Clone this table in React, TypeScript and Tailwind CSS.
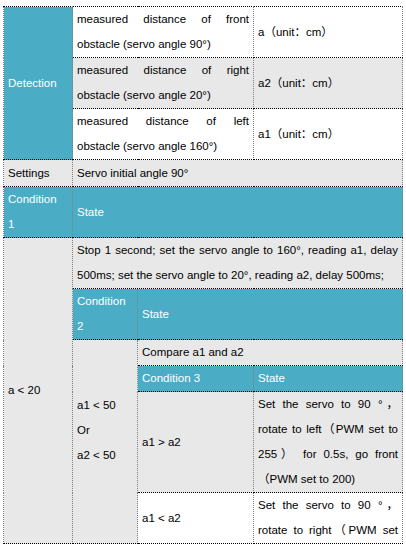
const teal = "bg-[#4bacc6] text-white"
const gray = "bg-[#e8e8e8]"

function J({ first, rest }: { first: string[]; rest?: string }) {
  return (
    <>
      {first.map((l, i) => (
        <div key={i} className="text-justify [text-align-last:justify]">
          {l}
        </div>
      ))}
      {rest && <div>{rest}</div>}
    </>
  )
}

const cell = "border border-dotted border-x-[#7f7f7f] border-y-black px-[4px] py-0 align-middle"

export default function App() {
  return (
    <div className="pl-[3px] pt-[6px] bg-white min-h-[545px]">
      <table
        className="table-fixed border-collapse w-[399px] text-[11.5px] leading-[25px] text-black"
        style={{ fontFamily: '"Liberation Sans", "Noto Sans CJK SC", sans-serif' }}
      >
        <colgroup>
          <col className="w-[69px]" />
          <col className="w-[65px]" />
          <col className="w-[116px]" />
          <col className="w-[149px]" />
        </colgroup>
        <tbody>
          {/* Detection */}
          <tr>
            <td rowSpan={3} className={`${cell} ${teal} border-t-solid`}>
              Detection
            </td>
            <td colSpan={2} className={`${cell} h-[50px] border-t-solid border-b-solid`}>
              <J first={["measured distance of front"]} rest="obstacle (servo angle 90°)" />
            </td>
            <td className={`${cell} border-t-solid border-b-solid`}>a（unit：cm）</td>
          </tr>
          <tr className={gray}>
            <td colSpan={2} className={`${cell} h-[50px]`}>
              <J first={["measured distance of right"]} rest="obstacle (servo angle 20°)" />
            </td>
            <td className={cell}>a2（unit：cm）</td>
          </tr>
          <tr>
            <td colSpan={2} className={`${cell} h-[50px]`}>
              <J first={["measured distance of left"]} rest="obstacle (servo angle 160°)" />
            </td>
            <td className={cell}>a1（unit：cm）</td>
          </tr>

          {/* Settings */}
          <tr className={gray}>
            <td className={`${cell} h-[27px]`}>Settings</td>
            <td colSpan={3} className={cell}>Servo initial angle 90°</td>
          </tr>

          {/* Condition 1 */}
          <tr className={teal}>
            <td className={`${cell} h-[51px]`}>
              Condition
              <br />1
            </td>
            <td colSpan={3} className={cell}>State</td>
          </tr>

          {/* a < 20 */}
          <tr className={gray}>
            <td rowSpan={6} className={cell}>a &lt; 20</td>
            <td colSpan={3} className={`${cell} h-[50px]`}>
              <J
                first={["Stop 1 second; set the servo angle to 160°, reading a1, delay"]}
                rest="500ms; set the servo angle to 20°, reading a2, delay 500ms;"
              />
            </td>
          </tr>
          <tr className={teal}>
            <td className={`${cell} h-[50px]`}>
              Condition
              <br />2
            </td>
            <td colSpan={2} className={cell}>State</td>
          </tr>
          <tr className={gray}>
            <td rowSpan={4} className={`${cell} pb-[22px]`}>
              a1 &lt; 50
              <br />
              Or
              <br />
              a2 &lt; 50
            </td>
            <td colSpan={2} className={`${cell} h-[25px]`}>Compare a1 and a2</td>
          </tr>
          <tr className={teal}>
            <td className={`${cell} h-[25px]`}>Condition 3</td>
            <td className={cell}>State</td>
          </tr>
          <tr className={gray}>
            <td className={`${cell} h-[100px]`}>a1 &gt; a2</td>
            <td className={cell}>
              <J
                first={["Set the servo to 90 °，", "rotate to left（PWM set to", "255） for 0.5s, go front"]}
                rest="（PWM set to 200)"
              />
            </td>
          </tr>
          <tr className="bg-white">
            <td className={`${cell} h-[48px]`}>a1 &lt; a2</td>
            <td className={cell}>
              <J first={["Set the servo to 90 °，", "rotate to right（PWM set"]} />
            </td>
          </tr>
        </tbody>
      </table>
    </div>
  )
}
